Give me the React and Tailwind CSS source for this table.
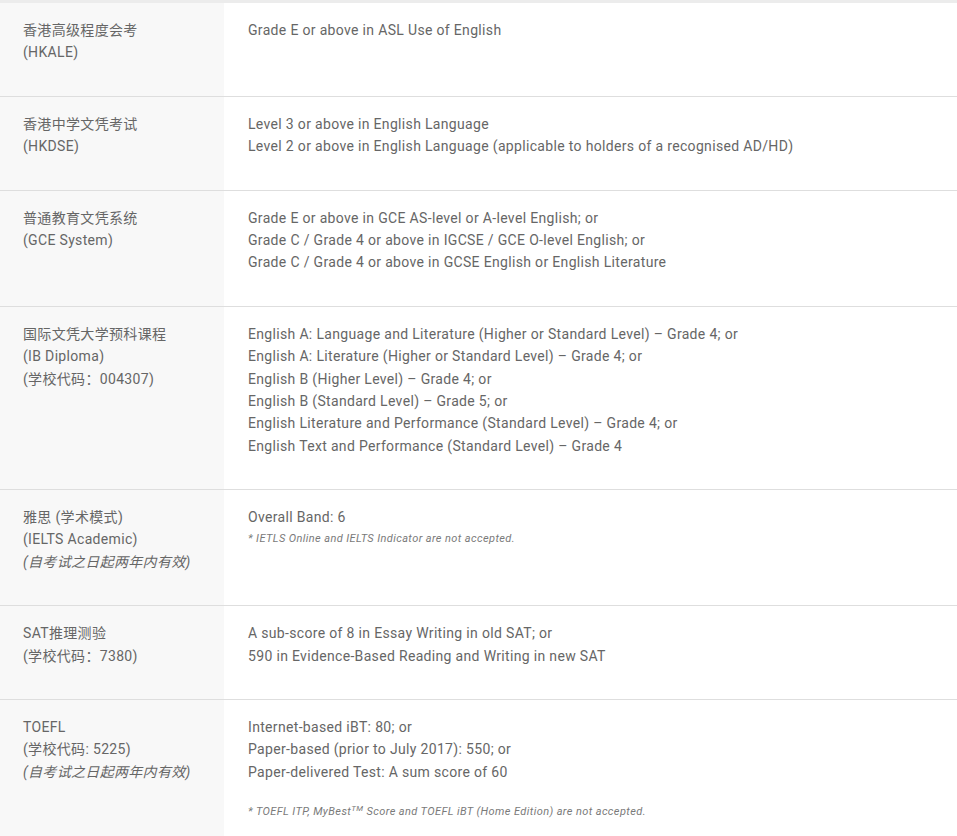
const rows = [
  {
    left: [{ t: "香港高级程度会考" }, { t: "(HKALE)" }],
    right: [["Grade E or above in ASL Use of English"]],
  },
  {
    left: [{ t: "香港中学文凭考试" }, { t: "(HKDSE)" }],
    right: [
      [
        "Level 3 or above in English Language",
        "Level 2 or above in English Language (applicable to holders of a recognised AD/HD)",
      ],
    ],
  },
  {
    left: [{ t: "普通教育文凭系统" }, { t: "(GCE System)" }],
    right: [
      [
        "Grade E or above in GCE AS-level or A-level English; or",
        "Grade C / Grade 4 or above in IGCSE / GCE O-level English; or",
        "Grade C / Grade 4 or above in GCSE English or English Literature",
      ],
    ],
  },
  {
    left: [{ t: "国际文凭大学预科课程" }, { t: "(IB Diploma)" }, { t: "(学校代码：004307)" }],
    right: [
      [
        "English A: Language and Literature (Higher or Standard Level) – Grade 4; or",
        "English A: Literature (Higher or Standard Level) – Grade 4; or",
        "English B (Higher Level) – Grade 4; or",
        "English B (Standard Level) – Grade 5; or",
        "English Literature and Performance (Standard Level) – Grade 4; or",
        "English Text and Performance (Standard Level) – Grade 4",
      ],
    ],
  },
  {
    left: [{ t: "雅思 (学术模式)" }, { t: "(IELTS Academic)" }, { t: "(自考试之日起两年内有效)", i: true }],
    right: [["Overall Band: 6", { note: "* IETLS Online and IELTS Indicator are not accepted." }]],
  },
  {
    left: [{ t: "SAT推理测验" }, { t: "(学校代码：7380)" }],
    right: [
      [
        "A sub-score of 8 in Essay Writing in old SAT; or",
        "590 in Evidence-Based Reading and Writing in new SAT",
      ],
    ],
  },
  {
    left: [{ t: "TOEFL" }, { t: "(学校代码: 5225)" }, { t: "(自考试之日起两年内有效)", i: true }],
    right: [
      [
        "Internet-based iBT: 80; or",
        "Paper-based (prior to July 2017): 550; or",
        "Paper-delivered Test: A sum score of 60",
      ],
      [{ toefl: true }],
    ],
  },
];

function Line({ item }) {
  if (typeof item === "string") return <div>{item}</div>;
  if (item.note)
    return (
      <div className="text-[11px] leading-[22.4px] tracking-[0.4px] italic text-[#7a7a7a]">{item.note}</div>
    );
  // TOEFL footnote with superscript
  return (
    <div className="pt-[2px] text-[11px] leading-[22.4px] tracking-[0.4px] italic text-[#7a7a7a]">
      * TOEFL ITP, MyBest<sup className="text-[8px]">TM</sup> Score and TOEFL iBT (Home Edition) are not accepted.
    </div>
  );
}

export default function App() {
  return (
    <div
      className="w-[957px] bg-white text-[14px] leading-[1.6] tracking-[0.33px] text-[#666]"
      style={{ fontFamily: 'Roboto, "Noto Sans CJK SC", sans-serif' }}
    >
      <div className="h-[3px] bg-[#ececec]" />
      {rows.map((row, idx) => (
        <div key={idx} className="grid grid-cols-[224px_1fr] border-b border-[#dedede]">
          <div className="bg-[#f8f8f8] pl-[23px] pr-4 pt-4 pb-8">
            {row.left.map((l, i) => (
              <div key={i} className={l.i ? "italic" : ""}>
                {l.t}
              </div>
            ))}
          </div>
          <div className="pl-6 pr-4 pt-4 pb-8">
            {row.right.map((para, pi) => (
              <div key={pi} className={pi > 0 ? "mt-4" : ""}>
                {para.map((item, li) => (
                  <Line key={li} item={item} />
                ))}
              </div>
            ))}
          </div>
        </div>
      ))}
    </div>
  );
}
